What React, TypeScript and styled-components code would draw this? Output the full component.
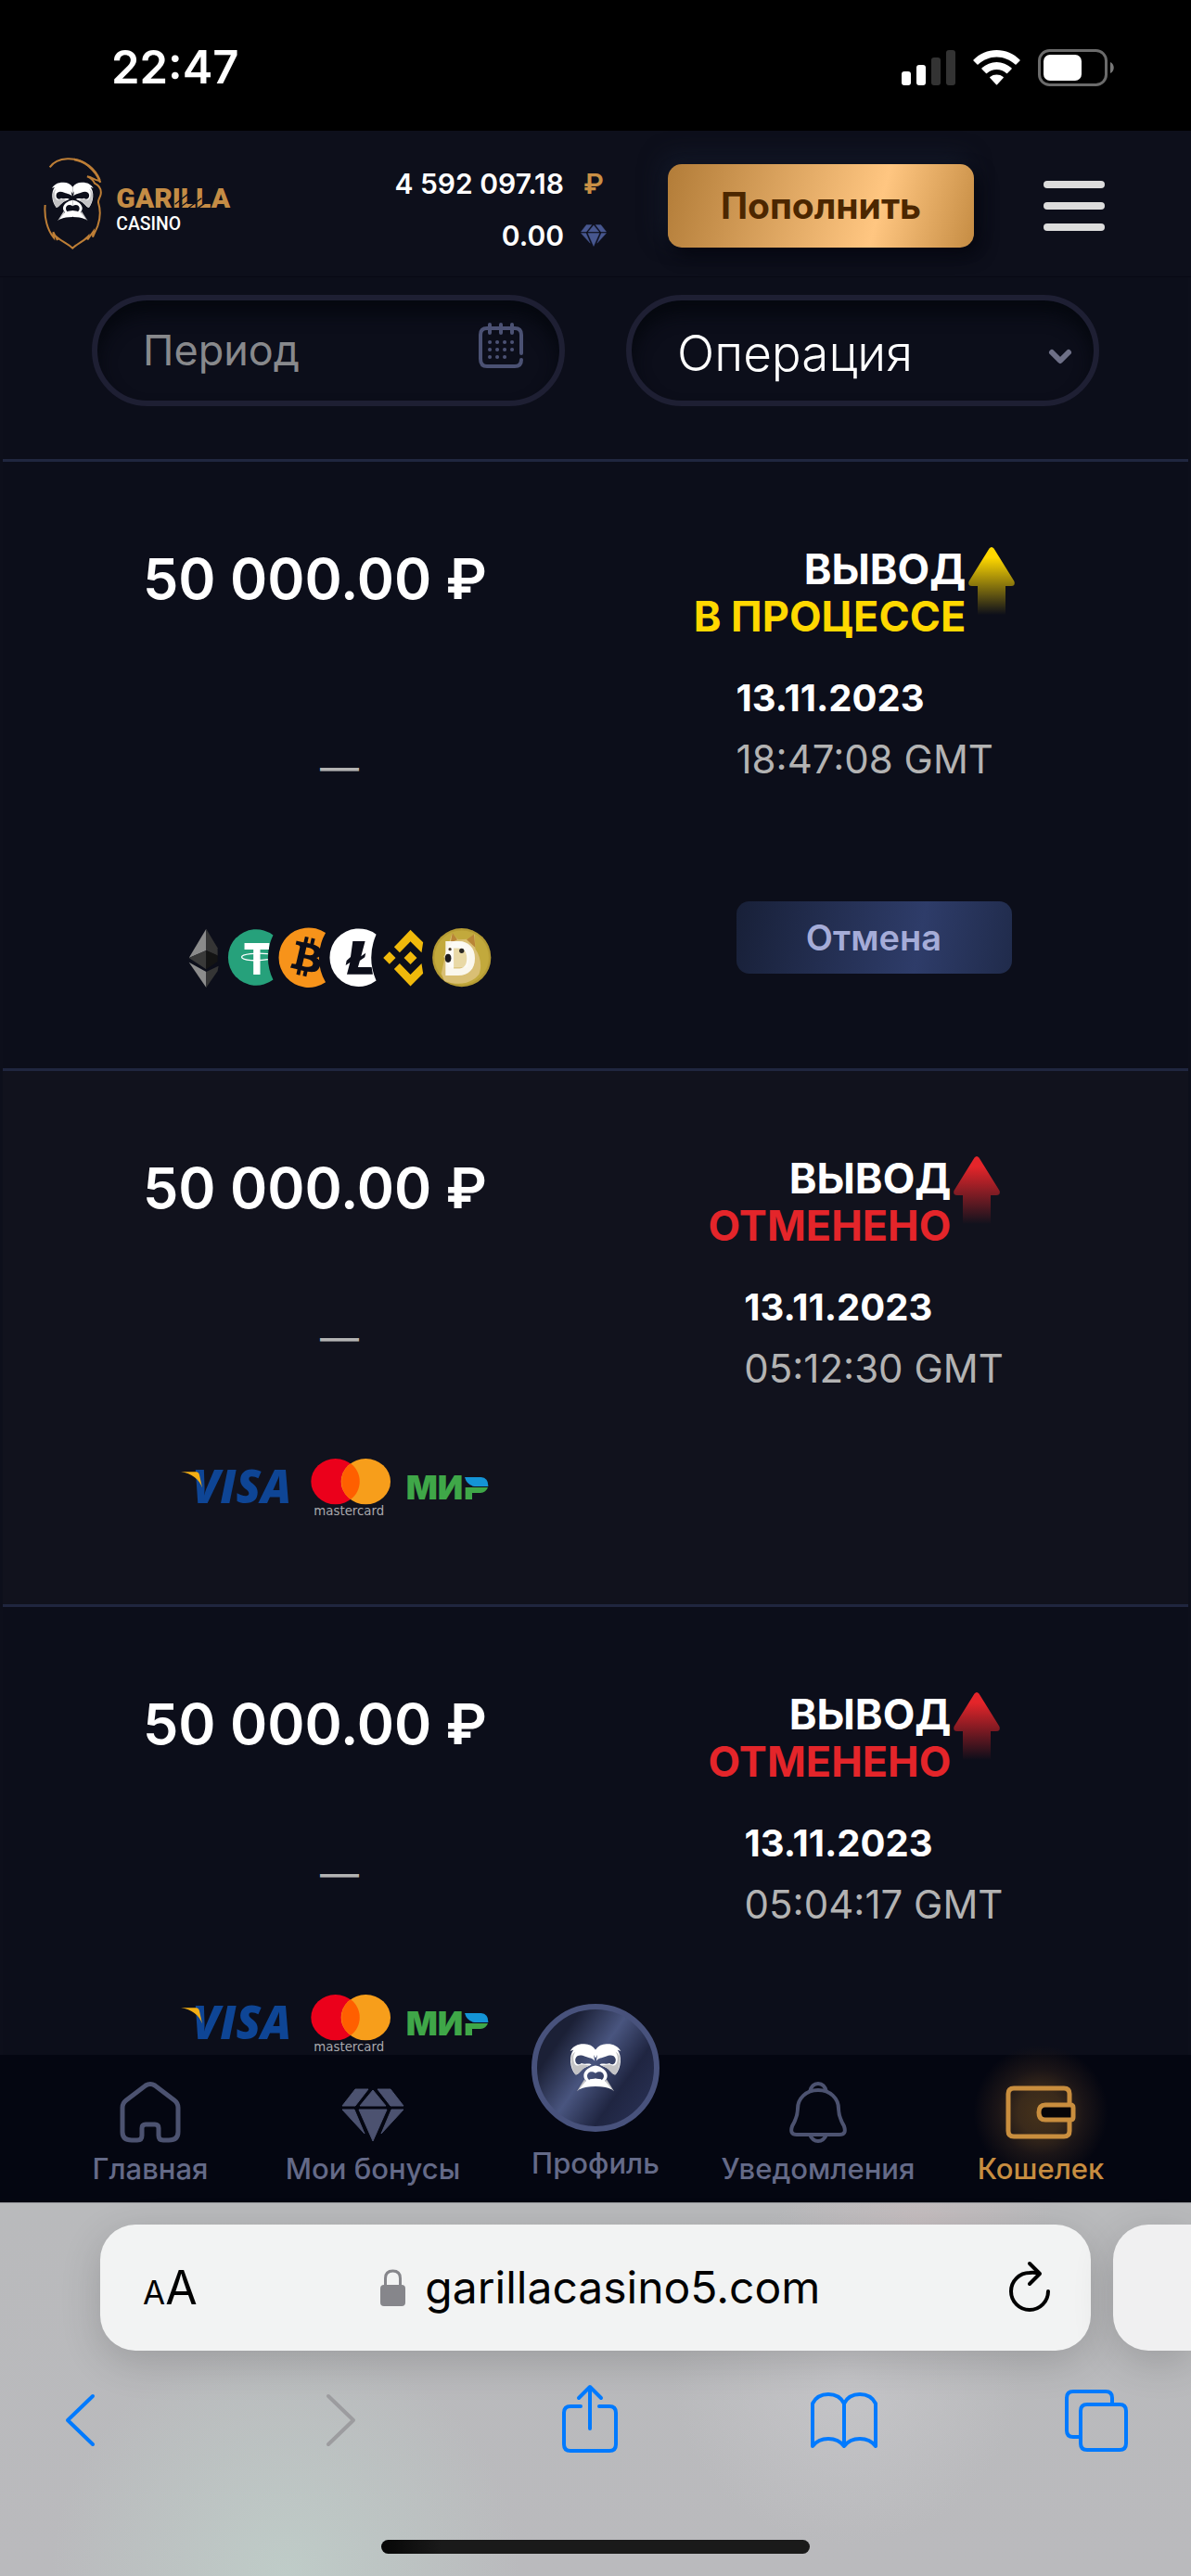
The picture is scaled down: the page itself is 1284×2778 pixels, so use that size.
import React from "react";
import styled, { createGlobalStyle } from "styled-components";
import { FaBtc } from "react-icons/fa";

const GlobalStyle = createGlobalStyle`
  *, *::before, *::after { box-sizing: border-box; }
  body { margin: 0; background: #0c0e1a; }
  button, input, select { font: inherit; color: inherit; }
  svg { display: block; flex: none; overflow: visible; }
`;

const Page = styled.div`
  display: flex;
  flex-direction: column;
  height: 100vh;
  background: #0d0f1b;
  color: #fff;
  font-family: Inter, "Noto Sans", sans-serif;
`;

/* ---------- status bar ---------- */

const StatusBar = styled.div`
  display: flex;
  flex: none;
  align-items: center;
  justify-content: space-between;
  height: 141px;
  padding: 4px 82px 0 120px;
  background: #000;
`;

const Clock = styled.time`
  font-size: 49px;
  font-weight: 600;
  line-height: 60px;
`;

const StatusIcons = styled.div`
  display: flex;
  align-items: center;
  gap: 19px;
`;

/* ---------- header ---------- */

const Header = styled.header`
  display: flex;
  flex: none;
  align-items: center;
  height: 158px;
  padding: 4px 93px 0 46px;
  background: #0d0f1b;
  border-bottom: 1px solid #080914;
`;

const LogoLink = styled.a`
  display: block;
  padding-bottom: 4px;
  margin-right: auto;
`;

const Balances = styled.div`
  display: grid;
  grid-template-columns: auto 28px;
  align-items: center;
  justify-items: end;
  column-gap: 18px;
  row-gap: 20px;
  padding-top: 8px;
  margin-right: 66px;
  font-size: 30px;
  font-weight: 600;
  line-height: 36px;
`;

const Ruble = styled.span`
  justify-self: center;
  color: #c98f45;
`;

const GemBalance = styled.span`
  color: #47578f;
`;

const DepositButton = styled.button`
  width: 330px;
  height: 90px;
  padding: 0;
  margin-right: 75px;
  border: 0;
  border-radius: 15px;
  background: linear-gradient(105deg, #b27c38 0%, #ffc681 68%, #c58c43 100%);
  box-shadow: 6px 8px 18px #05060f, -6px -8px 24px #141a2a;
  color: #4c2700;
  font-size: 39px;
  font-weight: 700;
`;

const MenuButton = styled.button`
  display: flex;
  flex-direction: column;
  gap: 15px;
  width: 66px;
  padding: 0;
  border: 0;
  background: none;
`;

const MenuLine = styled.span`
  height: 8px;
  border-radius: 4px;
  background: #dcdcdc;
`;

/* ---------- history ---------- */

const Main = styled.main`
  flex: 1;
  min-height: 0;
  padding: 0 3px;
  overflow-y: auto;
  scrollbar-width: none;
`;

const Filters = styled.form`
  display: grid;
  grid-template-columns: 1fr 1fr;
  gap: 66px;
  padding: 19px 96px 57px;
  background: #0c0e1a;
`;

const Field = styled.label<{ $end: number }>`
  display: flex;
  align-items: center;
  height: 120px;
  padding: 0 ${(p) => p.$end}px 0 49px;
  border: 6px solid #1e1f33;
  border-radius: 60px;
  box-shadow: inset 0 14px 18px #05080f;
`;

const PeriodInput = styled.input`
  flex: 1;
  width: 100%;
  min-width: 0;
  padding: 0;
  border: 0;
  outline: 0;
  background: none;
  font-size: 45px;
  line-height: 60px;
  &::placeholder { color: #88898c; opacity: 1; }
`;

const OperationSelect = styled.select`
  flex: 1;
  width: 100%;
  min-width: 0;
  height: 72px;
  padding: 0;
  margin-top: 6px;
  border: 0;
  outline: 0;
  appearance: none;
  background: none;
  font-size: 53px;
  font-weight: 300;
`;

const List = styled.ul`
  margin: 0;
  padding: 0;
  list-style: none;
`;

const Row = styled.li`
  display: grid;
  grid-template-columns: 1fr 1fr;
  padding: 90px 51px 87px 75px;
  border-top: 3px solid #20263f;
  background: #0c0e1a;
  &:nth-child(even) { background: #11121d; }
`;

const LeftColumn = styled.div`
  display: flex;
  flex-direction: column;
  align-items: center;
  justify-content: space-between;
  gap: 110px;
`;

const RightColumn = styled.div`
  display: flex;
  flex-direction: column;
  align-items: center;
  gap: 30px;
  padding-bottom: 15px;
`;

const Amount = styled.div`
  align-self: flex-start;
  padding-left: 76px;
  font-size: 61px;
  font-weight: 600;
  line-height: 72px;
  white-space: nowrap;
`;

const Dash = styled.div`
  padding-bottom: 4px;
  color: #b3b3b3;
  font-size: 42px;
  line-height: 32px;
`;

const Kind = styled.div`
  display: flex;
  gap: 3px;
  padding-right: 42px;
  font-size: 45px;
  font-weight: 700;
  line-height: 51px;
  text-align: right;
`;

const StatusText = styled.div<{ $color: string }>`
  color: ${(p) => p.$color};
`;

const Details = styled.div`
  line-height: 66px;
`;

const DateText = styled.div`
  font-size: 40px;
  font-weight: 700;
`;

const TimeText = styled.div`
  color: #b3b3b3;
  font-size: 42px;
`;

const CancelButton = styled.button`
  display: block;
  width: 297px;
  height: 78px;
  margin-top: 120px;
  padding: 0;
  border: 0;
  border-radius: 14px;
  background: linear-gradient(100deg, #182038 0%, #2e3c69 66%, #202b4b 100%);
  color: #a5acd8;
  font-size: 38px;
  font-weight: 600;
  line-height: 60px;
`;

/* ---------- tab bar ---------- */

const TabBar = styled.nav`
  display: grid;
  flex: none;
  grid-template-columns: repeat(5, 1fr);
  height: 159px;
  padding: 0 42px;
  background: #040611;
`;

const Tab = styled.a<{ $active?: boolean; $raised?: boolean }>`
  display: flex;
  flex-direction: column;
  align-items: center;
  justify-content: flex-end;
  gap: ${(p) => (p.$raised ? 14 : 8)}px;
  height: ${(p) => (p.$raised ? 153 : 159)}px;
  padding-bottom: 16px;
  color: ${(p) => (p.$active ? "#c78d40" : "#646a88")};
  font-size: 31px;
  font-weight: 500;
  line-height: 40px;
  text-decoration: none;
  white-space: nowrap;
`;

const DiamondSlot = styled.span`
  padding-bottom: 1px;
  color: #4c5270;
`;

const Glow = styled.span`
  margin: -44px -44px -40px;
  padding: 44px;
  background: radial-gradient(circle, #46321a 0%, #3a2a1b 22%, #1b1517 42%, rgba(4, 6, 17, 0) 66%);
`;

const ProfileBadge = styled.span`
  display: flex;
  flex: none;
  align-items: center;
  justify-content: center;
  width: 138px;
  height: 138px;
  border: 6px solid #48527c;
  border-radius: 50%;
  background: linear-gradient(125deg, #1b2036 22%, #49557f 47%, #1f2541 70%, #2c3459 100%);
`;

/* ---------- browser chrome ---------- */

const Browser = styled.footer`
  display: flex;
  flex: none;
  flex-direction: column;
  padding: 23px 0 24px;
  border-top: 1px solid #97989b;
  background:
    radial-gradient(circle at 24% 100%, #bfccc8 0%, rgba(191, 204, 200, 0) 24%),
    radial-gradient(circle at 71% 45%, #c5c5c8 0%, rgba(197, 197, 200, 0) 20%),
    radial-gradient(circle at 77% 5%, #c5bdbf 0%, rgba(197, 189, 191, 0) 14%),
    linear-gradient(#b9babc, #bababd);
`;

const AddressRow = styled.div`
  display: flex;
  gap: 24px;
  padding-left: 108px;
`;

const AddressBar = styled.div`
  display: flex;
  flex: 1;
  align-items: center;
  justify-content: space-between;
  height: 136px;
  padding: 0 44px 0 46px;
  border-radius: 38px;
  background: #f2f3f3;
  box-shadow: 0 12px 44px rgba(0, 0, 0, 0.16);
  color: #000;
`;

const NextCard = styled.div`
  width: 84px;
  height: 136px;
  border-radius: 38px 0 0 38px;
  background: #f0f0f1;
  box-shadow: 0 12px 44px rgba(0, 0, 0, 0.16);
`;

const PlainButton = styled.button`
  display: flex;
  align-items: baseline;
  padding: 0;
  border: 0;
  background: none;
`;

const SmallA = styled.span`
  font-size: 35px;
`;

const LargeA = styled.span`
  font-size: 50px;
`;

const Address = styled.div`
  display: flex;
  align-items: center;
  gap: 21px;
  padding-right: 6px;
  font-size: 48px;
  line-height: 60px;
`;

const Toolbar = styled.div`
  display: flex;
  justify-content: space-between;
  margin: 38px 0 94px;
  padding: 0 66px 0 50px;
`;

const HomeIndicator = styled.div`
  align-self: center;
  width: 36%;
  height: 15px;
  border-radius: 8px;
  background: linear-gradient(90deg, #060606, #1a1a1a 14%);
`;

/* ---------- drawings ---------- */

const halfFace =
  "M115 122 C108 112 98 107 86 107 C70 106 56 112 48 126 L57 122 C45 138 46 168 62 188 C72 188 76 174 90 168 L104 162 C100 156 88 162 78 158 C68 166 60 156 62 146 C66 134 78 136 88 140 C98 144 108 144 113 152 L110 136 L115 144 Z";

const Face = () => (
  <>
    {["", "translate(230 0) scale(-1 1)"].map((t) => (
      <g key={t} transform={t || undefined}>
        <path fill="#fff" d={halfFace} />
        <path fill="#c3c3c5" d="M50 150 C52 168 56 180 62 188 C72 188 76 174 90 168 L100 163 C88 164 82 160 74 162 C64 168 58 160 57 148 C56 140 58 134 62 128 C54 132 50 140 50 150 Z" />
        <path fill="#c3c3c5" d="M86 200 L66 232 C74 224 84 220 96 219 Z" />
        <path fill="#fff" d="M115 164 C100 166 84 178 84 190 C84 196 86 200 90 204 L72 227 C84 221 98 219 115 219 V208 C106 209 94 202 93 192 C93 182 104 176 115 184 Z" />
        <path fill="#fff" d="M116 198 L100 200 L92 214 L116 216 Z" />
      </g>
    ))}
  </>
);

const Logo = () => (
  <svg width="204" height="102" viewBox="18 24 612 306" role="img" aria-label="Garilla Casino">
    <g fill="none" stroke="#bd7e36" strokeWidth="6" strokeLinejoin="miter">
      <path d="M41 58 C64 24 128 20 166 54 C186 72 198 88 205 107 L199 101 C186 101 178 90 162 88 C176 94 183 102 186 110 C202 118 208 132 206 145 C204 156 197 162 198 172 C206 198 205 222 196 248 L180 284 L182 266 L163 292 L165 282 C148 300 128 306 115 320 C100 306 82 300 64 284 L66 294 L52 268 L54 286 C34 262 22 222 26 180" />
      <path strokeWidth="8" d="M120 33 C152 38 188 62 202 100" />
    </g>
    <Face />
    <text x="256" y="188" fill="#c48c45" fontFamily="Roboto, sans-serif" fontWeight="900" fontSize="90">GARILLA</text>
    <path
      stroke="#0d0f1b"
      strokeWidth="4"
      d="M446 178 L494 140 M462 188 L506 156 M490 190 L532 158 M520 190 L546 172 M494 150 L516 130 M504 136 L524 118 M556 148 L580 116"
    />
    <text x="256" y="261" fill="#fff" fontFamily="Roboto, sans-serif" fontWeight="500" fontSize="58">CASINO</text>
  </svg>
);

const Signal = () => (
  <svg width="58" height="38" viewBox="0 0 58 38">
    <rect x="0" y="23" width="10" height="15" rx="3" fill="#fff" />
    <rect x="16" y="16" width="10" height="22" rx="3" fill="#fff" />
    <rect x="32" y="8" width="10" height="30" rx="3" fill="#333" />
    <rect x="48" y="0" width="10" height="38" rx="3" fill="#333" />
  </svg>
);

const Wifi = () => (
  <svg width="51" height="38" viewBox="0 0 51 38" fill="#fff">
    <path d="M25.500 0 C16 0 7 4 0.500 10.500 Q0 11 0.500 11.500 L4.500 15.500 Q5 16 5.500 15.500 C11 10.500 18 7.500 25.500 7.500 C33 7.500 40 10.500 45.500 15.500 Q46 16 46.500 15.500 L50.500 11.500 Q51 11 50.500 10.500 C44 4 35 0 25.500 0Z" />
    <path d="M25.500 13 C19.500 13 14 15.300 9.500 19.300 Q9 20 9.500 20.500 L14 25 Q14.500 25.400 15 25 C18 22.300 21.500 21 25.500 21 C29.500 21 33 22.300 36 25 Q36.500 25.400 37 25 L41.500 20.500 Q42 20 41.500 19.300 C37 15.300 31.500 13 25.500 13Z" />
    <path d="M25.500 26.500 C22.700 26.500 20.500 27.300 18.300 29 Q17.800 29.500 18.300 30 L25 37.300 Q25.500 37.800 26 37.300 L32.700 30 Q33.200 29.500 32.700 29 C30.500 27.300 28.300 26.500 25.500 26.500Z" />
  </svg>
);

const Battery = () => (
  <svg width="83" height="40" viewBox="0 0 83 40">
    <rect x="1.500" y="1.500" width="72" height="37" rx="11" fill="none" stroke="#6b6b6b" strokeWidth="3" />
    <path d="M78 14 C83 16 83 24 78 26 Z" fill="#777" />
    <rect x="6" y="6" width="41" height="28" rx="7" fill="#fff" />
  </svg>
);

const Diamond = ({ width, height }: { width: number; height: number }) => (
  <svg width={width} height={height} viewBox="0 0 68 58" fill="currentColor" stroke="currentColor" strokeWidth="1" strokeLinejoin="round">
    <path d="M15 1 H29 L15 19 H1 Z M39 1 H53 L67 19 H53 Z M34 2 L48 19 H20 Z M1 23 H14 L25 49 Z M67 23 H54 L43 49 Z M19 23 H49 L34 57 Z" />
  </svg>
);

const Calendar = () => (
  <svg width="48" height="48" viewBox="0 0 48 48" fill="none" stroke="#4b5173" strokeWidth="4" strokeLinecap="round">
    <path d="M46 32 V12 Q46 5 39 5 H9 Q2 5 2 12 V38 Q2 46 9 46 H39 Q46 46 46 39 M12 1 V10 M24 1 V10 M36 1 V10" />
    <path d="M12 20 H12.100 M20 20 H20.100 M28 20 H28.100 M36 20 H36.100 M12 28 H12.100 M20 28 H20.100 M28 28 H28.100 M36 28 H36.100 M12 36 H12.100 M20 36 H20.100 M28 36 H28.100" />
  </svg>
);

const CalendarSlot = styled.span`
  padding-bottom: 10px;
`;

const Chevron = () => (
  <svg width="26" height="18" viewBox="0 0 26 18" fill="none" stroke="#6e7087" strokeWidth="6" strokeLinecap="round" strokeLinejoin="round">
    <path d="M4 4 L13 13 L22 4" />
  </svg>
);

const ChevronSlot = styled.span`
  padding-top: 14px;
`;

const Arrow = ({ color, id }: { color: string; id: string }) => (
  <svg width="50" height="76" viewBox="0 0 50 76">
    <defs>
      <linearGradient id={id} x1="0" y1="0" x2="0" y2="1">
        <stop offset="0.15" stopColor={color} />
        <stop offset="1" stopColor={color} stopOpacity="0" />
      </linearGradient>
    </defs>
    <path fill={`url(#${id})`} d="M22.500 3.500 Q25 0.500 27.500 3.500 L49.500 39 Q51 44 46 44 H40 V75 H10 V44 H4 Q-1 44 0.500 39 Z" />
  </svg>
);

const Crypto = () => (
  <svg width="326" height="66" viewBox="70 117 980 198" role="img" aria-label="Криптовалюты">
    <path fill="#8b8b8b" d="M128 125 L72 219 L128 195Z" />
    <path fill="#353535" d="M128 125 L165 187 V212 L128 195Z" />
    <path fill="#393939" d="M72 219 L128 195 V256Z" />
    <path fill="#141414" d="M128 195 L165 211 V231 L128 256Z" />
    <path fill="#8c8c8c" d="M72 233 L128 264 V315Z" />
    <path fill="#353535" d="M128 264 L168 245 L165 262 L128 315Z" />

    <path fill="#26a17b" d="M345 145 A91 91 0 1 0 345 290 A165 165 0 0 1 345 145Z" />
    <path fill="#fff" d="M252 171 H333 L331 192 H303 V273 H281 V192 H252Z" />
    <path fill="none" stroke="#fff" strokeWidth="4" d="M328 206 C290 202 243 206 243 216 C243 228 296 230 328 224" />

    <path fill="#f7931a" d="M515 138 A97 97 0 1 0 515 298 A160 160 0 0 1 515 138Z" />
    <g transform="rotate(13 456 216)">
      <FaBtc x={393} y={153} size={126} color="#0c0e1a" />
    </g>

    <path fill="#fff" d="M679 143 A94 94 0 1 0 679 293 A190 190 0 0 1 679 143Z" />
    <path fill="#0c0e1a" d="M603 165 H643 L630 214 L645 203 L642 217 L626 228 L620 249 H664 L668 272 H584 L594 234 L580 243 L583 228 L596 216Z" />

    <g fill="#f0b90b">
      <path d="M737 184 L790 128 L831 169 L826 202 L790 166 L755 202Z M737 255 L755 237 L790 273 L826 237 L831 269 L790 311Z M702 219 L722 199 L742 219 L722 239Z M769 219 L790 198 L811 219 L790 240Z" />
    </g>

    <circle cx="956" cy="218" r="95" fill="#b59b34" />
    <circle cx="956" cy="218" r="88" fill="#c2a93c" />
    <path fill="#d9bf74" d="M905 200 L925 140 L945 160 L975 158 L998 142 L1000 190 C1018 215 1022 250 1012 272 C990 300 950 312 900 294 L890 270Z" />
    <path fill="#b98536" d="M920 170 L926 138 L942 160Z M972 160 L996 142 L1000 185Z" />
    <path fill="#e9d9a6" d="M908 195 L930 165 L960 166 L985 190 L975 250 L915 250 L898 215Z" />
    <text x="895" y="276" fill="#fff" fillOpacity="0.87" fontFamily="Inter, sans-serif" fontWeight="800" fontSize="152">D</text>
    <ellipse cx="912" cy="220" rx="10" ry="14" fill="#1d1c20" />
    <circle cx="956" cy="196" r="8" fill="#2a2724" />
    <circle cx="918" cy="191" r="5" fill="#4a3a28" />
  </svg>
);

const Cards = () => (
  <svg width="343" height="70" viewBox="45 72 1029 210" role="img" aria-label="Visa, Mastercard, Мир">
    <text x="82" y="217" fill="#0e4595" fontFamily="'Open Sans', sans-serif" fontStyle="italic" fontWeight="800" fontSize="146">VISA</text>
    <path fill="#f2ae14" d="M45 115 H94 Q103 116 105 125 L114 166 C104 138 80 120 45 115Z" />
    <ellipse cx="545" cy="146" rx="79" ry="74" fill="#eb001b" />
    <ellipse cx="643" cy="146" rx="80" ry="74" fill="#f79e1b" />
    <path fill="#ff5f00" d="M594 88 C633 116 633 176 594 204 C555 176 555 116 594 88Z" />
    <text x="475" y="255" fill="#a9a9ad" fontFamily="'DejaVu Sans', sans-serif" fontSize="40">mastercard</text>
    <text x="773" y="204" fill="#3fa748" fontFamily="Inter, sans-serif" fontWeight="900" fontSize="107">МИ</text>
    <path fill="#1494d6" d="M963 132 H1016 Q1040 134 1039 162 H995 Q970 158 963 132Z" />
    <path fill="#3fa748" d="M965 165 H1038 Q1032 182 1014 183 H987 V204 H965Z" />
  </svg>
);

const Home = () => (
  <svg width="64" height="66" viewBox="0 0 64 66" fill="none" stroke="#4c5270" strokeWidth="5">
    <path d="M27 4 Q32 1 37 4 L58 20 Q62 23 62 28 V54 Q62 63 52 63 H46 Q41 63 41 58 V50 Q41 46 37 46 H27 Q23 46 23 50 V58 Q23 63 18 63 H12 Q2 63 2 54 V28 Q2 23 6 20 Z" />
  </svg>
);

const Bell = () => (
  <svg width="62" height="66" viewBox="0 0 62 66" fill="none" stroke="#4c5270" strokeWidth="4">
    <path d="M31 9 C18 9 9 18 9 29 C9 38 6 42 3 48 Q0 57 8 57 H54 Q62 57 59 48 C56 42 53 38 53 29 C53 18 44 9 31 9Z" />
    <path d="M22 11 Q24 2 31 2 Q38 2 40 11 M22 57 Q25 64 31 64 Q37 64 40 57" />
  </svg>
);

const Wallet = () => (
  <svg width="76" height="58" viewBox="0 0 76 58" fill="none" stroke="#c98e3e" strokeWidth="5">
    <path d="M69 20 V9 Q69 3 63 3 H9 Q3 3 3 9 V49 Q3 55 9 55 H63 Q69 55 69 49 V38" />
    <path fill="#060508" d="M73 24 V34 Q73 37 70 37 H43 Q36 37 36 29 Q36 21 43 21 H70 Q73 21 73 24Z" />
  </svg>
);

const Lock = () => (
  <svg width="27" height="40" viewBox="0 0 27 40">
    <rect x="0" y="17" width="27" height="23" rx="4" fill="#86868b" />
    <path d="M5.500 18 V10 Q5.500 2 13.500 2 Q21.500 2 21.500 10 V18" fill="none" stroke="#86868b" strokeWidth="3" />
  </svg>
);

const Reload = () => (
  <svg width="44" height="56" viewBox="0 0 44 56" fill="none" stroke="#000" strokeWidth="4" strokeLinecap="round" strokeLinejoin="round">
    <path d="M42 32 A20 20 0 1 1 22 12 Q27 11 32 13" />
    <path d="M22 2 L33 13 L22 24" />
  </svg>
);

const ToolIcon = ({ d, color }: { d: string; color: string }) => (
  <svg width="72" height="72" viewBox="0 0 72 72" fill="none" stroke={color} strokeWidth="4" strokeLinecap="round" strokeLinejoin="round">
    <path d={d} />
  </svg>
);

/* ---------- data ---------- */

const tools = [
  { label: "Назад", d: "M50 11 L23 37 L50 63", color: "#007aff" },
  { label: "Вперёд", d: "M30 11 L57 37 L30 63", color: "#9c9c9f" },
  { label: "Поделиться", d: "M28 22 H17 Q10 22 10 29 V63 Q10 70 17 70 H59 Q66 70 66 63 V29 Q66 22 59 22 H48 M38 46 V2 M26 13 L38 1 L50 13", color: "#007aff" },
  { label: "Закладки", d: "M38 19 Q33 9 21 9 Q9 9 4 19 V65 Q10 57 21 57 Q32 57 38 65 Q44 57 55 57 Q66 57 72 65 V19 Q67 9 55 9 Q43 9 38 19 V64", color: "#007aff" },
  { label: "Вкладки", d: "M18 55 H11 Q4 55 4 48 V13 Q4 6 11 6 H46 Q53 6 53 13 V19 M26 20 H61 Q68 20 68 27 V62 Q68 69 61 69 H26 Q19 69 19 62 V27 Q19 20 26 20Z", color: "#007aff" },
];

const operations = [
  { id: 1, amount: "50 000.00 ₽", status: "В ПРОЦЕССЕ", color: "#ffd800", date: "13.11.2023", time: "18:47:08 GMT", crypto: true },
  { id: 2, amount: "50 000.00 ₽", status: "ОТМЕНЕНО", color: "#e4252a", date: "13.11.2023", time: "05:12:30 GMT", crypto: false },
  { id: 3, amount: "50 000.00 ₽", status: "ОТМЕНЕНО", color: "#e4252a", date: "13.11.2023", time: "05:04:17 GMT", crypto: false },
];

export default function App() {
  return (
    <>
      <GlobalStyle />
      <Page>
        <StatusBar>
          <Clock>22:47</Clock>
          <StatusIcons>
            <Signal />
            <Wifi />
            <Battery />
          </StatusIcons>
        </StatusBar>

        <Header>
          <LogoLink href="#home"><Logo /></LogoLink>
          <Balances>
            <span>4 592 097.18</span>
            <Ruble>₽</Ruble>
            <span>0.00</span>
            <GemBalance><Diamond width={28} height={24} /></GemBalance>
          </Balances>
          <DepositButton type="button">Пополнить</DepositButton>
          <MenuButton type="button" aria-label="Меню">
            <MenuLine />
            <MenuLine />
            <MenuLine />
          </MenuButton>
        </Header>

        <Main>
          <Filters>
            <Field $end={39}>
              <PeriodInput type="text" placeholder="Период" aria-label="Период" />
              <CalendarSlot><Calendar /></CalendarSlot>
            </Field>
            <Field $end={23}>
              <OperationSelect aria-label="Операция" defaultValue="all">
                <option value="all">Операция</option>
              </OperationSelect>
              <ChevronSlot><Chevron /></ChevronSlot>
            </Field>
          </Filters>
          <List>
            {operations.map((op) => (
              <Row key={op.id}>
                <LeftColumn>
                  <Amount>{op.amount}</Amount>
                  <Dash>—</Dash>
                  {op.crypto ? <Crypto /> : <Cards />}
                </LeftColumn>
                <RightColumn>
                  <Kind>
                    <div>
                      <div>ВЫВОД</div>
                      <StatusText $color={op.color}>{op.status}</StatusText>
                    </div>
                    <Arrow color={op.color} id={`arrow-${op.id}`} />
                  </Kind>
                  <Details>
                    <DateText>{op.date}</DateText>
                    <TimeText>{op.time}</TimeText>
                    {op.crypto && <CancelButton type="button">Отмена</CancelButton>}
                  </Details>
                </RightColumn>
              </Row>
            ))}
          </List>
        </Main>

        <TabBar>
          <Tab href="#home"><Home />Главная</Tab>
          <Tab href="#bonuses"><DiamondSlot><Diamond width={68} height={58} /></DiamondSlot>Мои бонусы</Tab>
          <Tab href="#profile" $raised>
            <ProfileBadge>
              <svg width="58" height="54" viewBox="44 104 142 132"><Face /></svg>
            </ProfileBadge>
            Профиль
          </Tab>
          <Tab href="#notifications"><Bell />Уведомления</Tab>
          <Tab href="#wallet" $active><Glow><Wallet /></Glow>Кошелек</Tab>
        </TabBar>

        <Browser>
          <AddressRow>
            <AddressBar>
              <PlainButton type="button" aria-label="Размер текста">
                <SmallA>A</SmallA>
                <LargeA>A</LargeA>
              </PlainButton>
              <Address>
                <Lock />
                <span>garillacasino5.com</span>
              </Address>
              <PlainButton type="button" aria-label="Обновить"><Reload /></PlainButton>
            </AddressBar>
            <NextCard />
          </AddressRow>
          <Toolbar>
            {tools.map((t) => (
              <PlainButton key={t.label} type="button" aria-label={t.label}>
                <ToolIcon d={t.d} color={t.color} />
              </PlainButton>
            ))}
          </Toolbar>
          <HomeIndicator />
        </Browser>
      </Page>
    </>
  );
}
